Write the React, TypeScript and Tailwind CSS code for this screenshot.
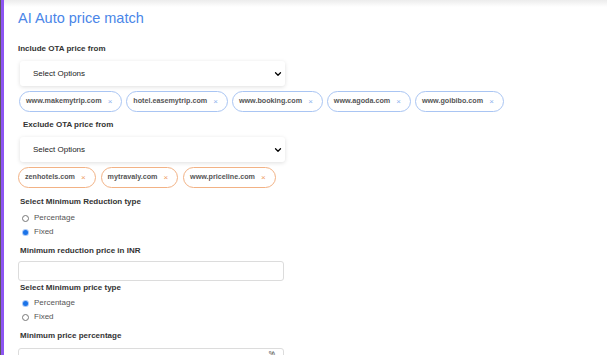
import { ChevronDown } from "lucide-react";

const includeOtas = [
  "www.makemytrip.com",
  "hotel.easemytrip.com",
  "www.booking.com",
  "www.agoda.com",
  "www.goibibo.com",
];

const excludeOtas = ["zenhotels.com", "mytravaly.com", "www.priceline.com"];

function Chip({ label, tone }: { label: string; tone: "blue" | "orange" }) {
  const border = tone === "blue" ? "border-[#a9c5f3]" : "border-[#f2b285]";
  const x = tone === "blue" ? "text-[#8fb2ee]" : "text-[#ee9a62]";
  return (
    <span
      className={`flex h-[21px] items-center gap-[6px] rounded-full border bg-white pl-[6px] pr-[9px] ${border}`}
    >
      <span className="text-[7.2px] font-bold text-[#555]">{label}</span>
      <span className={`text-[8px] leading-none ${x}`}>×</span>
    </span>
  );
}

function SelectBox() {
  return (
    <div className="ml-[2px] flex h-[25px] w-[265px] items-center justify-between rounded-[3px] bg-white pl-[13px] pr-[2px] shadow-[0_1px_4px_rgba(0,0,0,0.13)]">
      <span className="text-[8px] text-[#222]">Select Options</span>
      <ChevronDown className="h-[10px] w-[10px] text-black" strokeWidth={3} />
    </div>
  );
}

function Radio({ label, checked }: { label: string; checked?: boolean }) {
  return (
    <div className="flex h-[14px] items-center gap-[5px] pl-[4px]">
      {checked ? (
        <span className="flex h-[7px] w-[7px] items-center justify-center rounded-full bg-[#a9c8f7]">
          <span className="h-[5px] w-[5px] rounded-full bg-[#1a73e8]" />
        </span>
      ) : (
        <span className="h-[7px] w-[7px] rounded-full border border-[#777] bg-white" />
      )}
      <span className="text-[8px] leading-[14px] text-[#555]">{label}</span>
    </div>
  );
}

function Label({ children, className = "" }: { children: string; className?: string }) {
  return (
    <div className={`text-[8px] leading-[12px] font-bold text-[#333] ${className}`}>{children}</div>
  );
}

export default function App() {
  return (
    <div
      className="flex h-[355px] w-[607px] overflow-hidden bg-white"
      style={{ fontFamily: '"Liberation Sans", Arial, sans-serif' }}
    >
      <div className="w-px bg-[#5a5a5a]" />
      <div className="w-[3px] bg-[#8d55f2]" />
      <div className="flex-1">
        <div className="h-[7px] bg-gradient-to-b from-[#ececec] to-white" />
        <div className="pl-[14px]">
          <h1 className="mt-[2px] text-[14.5px] leading-[18px] text-[#4a86e8]">
            AI Auto price match
          </h1>

          <Label className="mt-[16px]">Include OTA price from</Label>
          <div className="mt-[6px]">
            <SelectBox />
          </div>
          <div className="mt-[5px] flex gap-[4px] pl-[1px]">
            {includeOtas.map((o) => (
              <Chip key={o} label={o} tone="blue" />
            ))}
          </div>

          <Label className="mt-[7px] pl-[5px]">Exclude OTA price from</Label>
          <div className="mt-[6px]">
            <SelectBox />
          </div>
          <div className="mt-[5px] flex gap-[5px]">
            {excludeOtas.map((o) => (
              <Chip key={o} label={o} tone="orange" />
            ))}
          </div>

          <Label className="mt-[8px] pl-[2px]">Select Minimum Reduction type</Label>
          <div className="mt-[3px]">
            <Radio label="Percentage" />
            <Radio label="Fixed" checked />
          </div>

          <Label className="mt-[6px] pl-[2px]">Minimum reduction price in INR</Label>
          <div className="mt-[4px] h-[20px] w-[266px] rounded-[3px] border border-[#dcdcdc] bg-white" />

          <Label className="mt-[1px] pl-[2px]">Select Minimum price type</Label>
          <div className="mt-[2px]">
            <Radio label="Percentage" checked />
            <Radio label="Fixed" />
          </div>

          <Label className="mt-[6px] pl-[2px]">Minimum price percentage</Label>
          <div className="mt-[6px] flex h-[20px] w-[266px] items-start justify-end rounded-[3px] border border-[#dcdcdc] bg-white pr-[8px] pt-[1px]">
            <span className="text-[7px] leading-[8px] text-[#333]">%</span>
          </div>
        </div>
      </div>
    </div>
  );
}
